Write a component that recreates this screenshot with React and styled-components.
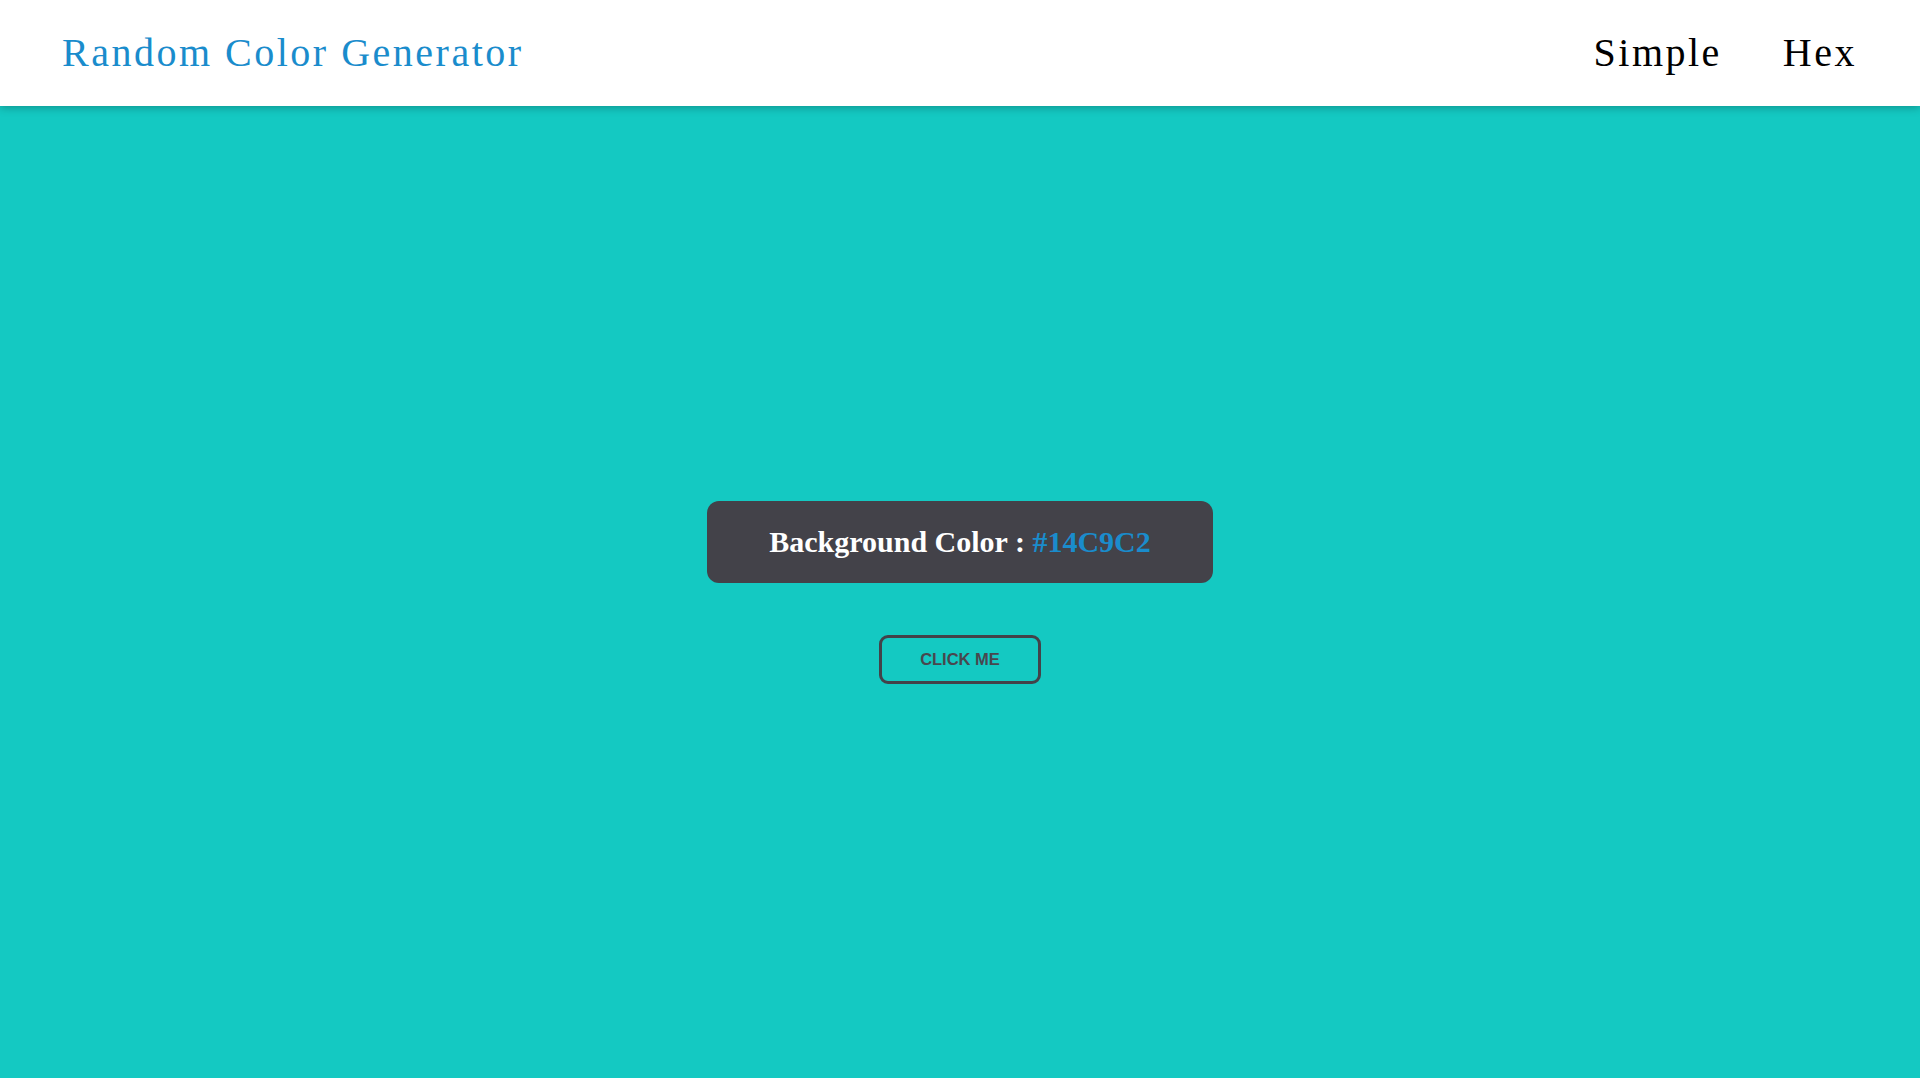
import React, { useState } from 'react';
import styled, { createGlobalStyle } from 'styled-components';

//* Styles

const GlobalStyle = createGlobalStyle`
  *,
  *:before,
  *:after {
    box-sizing: border-box;
  }
  html,
  body,
  #root {
    margin: 0;
    height: 100%;
  }
  body {
    font-family: 'Liberation Serif', 'Times New Roman', serif;
  }
`;

const Page = styled.div`
  display: flex;
  flex-direction: column;
  height: 100vh;
  background-color: ${props => props.bg};
`;

const NavBar = styled.nav`
  position: relative;
  z-index: 1;
  display: flex;
  align-items: center;
  justify-content: space-between;
  height: 106px;
  padding: 0 63px 2px 62px;
  background-color: #fff;
  box-shadow: 0 2px 8px rgba(0, 0, 0, 0.25);
`;

const Brand = styled.div`
  font-size: 40px;
  letter-spacing: 2.5px;
  color: #1a8ccc;
`;

const Links = styled.div`
  display: flex;
  gap: 61px;
`;

const NavLink = styled.a`
  font-size: 40px;
  letter-spacing: 2.5px;
  color: #000;
  text-decoration: none;
  cursor: pointer;
`;

const Main = styled.main`
  flex: 1;
  display: flex;
  flex-direction: column;
  align-items: center;
  justify-content: center;
  gap: 52px;
`;

const ColorCard = styled.h2`
  margin: 0;
  padding: 24px 62px;
  border-radius: 12px;
  background-color: #434249;
  color: #fff;
  font-size: 30px;
  font-weight: bold;
  white-space: nowrap;
`;

const HexValue = styled.span`
  color: #1a8ccc;
`;

const Button = styled.button`
  width: 162px;
  height: 49px;
  border: 3px solid #434249;
  border-radius: 9px;
  background: transparent;
  color: #48474e;
  font-family: 'Liberation Sans', Arial, sans-serif;
  font-size: 16.5px;
  font-weight: bold;
  cursor: pointer;
`;

//* -------------------------------------------------------------------------
const randomHex = () => {
  const chars = '0123456789ABCDEF';
  let out = '#';
  for (let i = 0; i < 6; i++) {
    out += chars[Math.floor(Math.random() * 16)];
  }
  return out;
};

const App = () => {
  const [color, setColor] = useState('#14C9C2');

  return (
    <Page bg={color}>
      <GlobalStyle />
      <NavBar>
        <Brand>Random Color Generator</Brand>
        <Links>
          <NavLink>Simple</NavLink>
          <NavLink>Hex</NavLink>
        </Links>
      </NavBar>
      <Main>
        <ColorCard>
          Background Color : <HexValue>{color}</HexValue>
        </ColorCard>
        <Button onClick={() => setColor(randomHex())}>CLICK ME</Button>
      </Main>
    </Page>
  );
};

export default App;
